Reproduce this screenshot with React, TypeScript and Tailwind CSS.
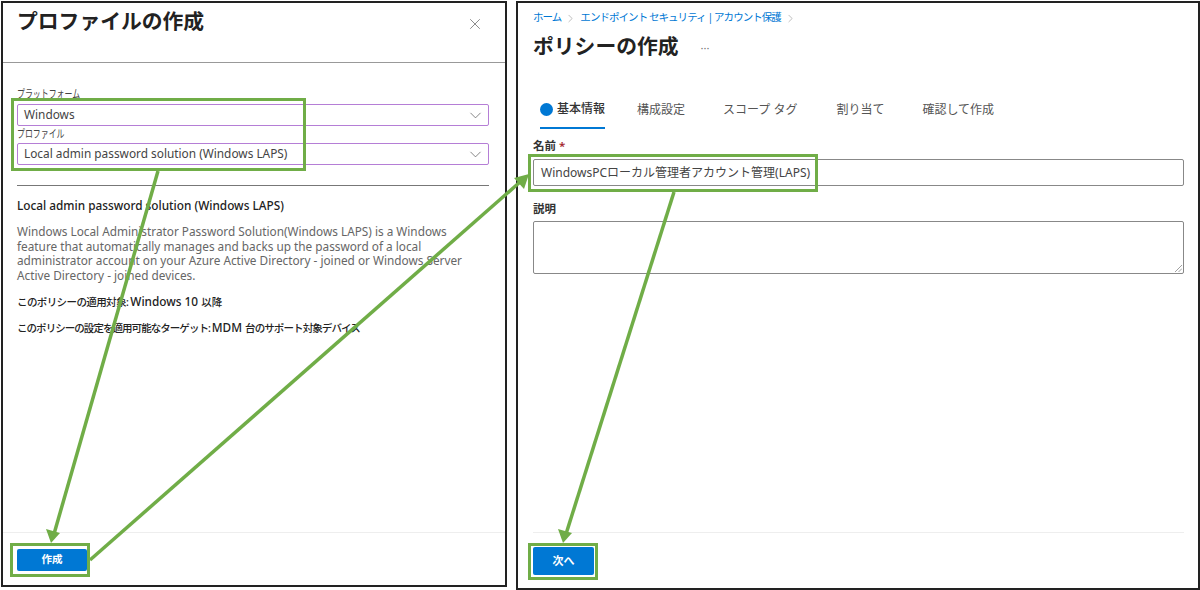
import { X, ChevronDown, ChevronRight } from "lucide-react";

const font = { fontFamily: '"Noto Sans", "Noto Sans CJK JP", sans-serif' };

function SelectBox({ value }: { value: string }) {
  return (
    <div className="flex items-center justify-between h-[22px] border border-[#b57ed6] rounded-[2px] pl-[6px] pr-[3px] ml-[14px] mr-[16px] text-[11.85px] text-[#444]">
      <span>{value}</span>
      <ChevronDown className="w-[19px] h-[19px] text-[#666]" strokeWidth={1} />
    </div>
  );
}

function FieldLabel({ text, className }: { text: string; className: string }) {
  return (
    <div className={`pl-[14px] text-[11px] text-[#444] ${className}`}>
      <div className="origin-left scale-x-[0.72] whitespace-nowrap">{text}</div>
    </div>
  );
}

function ProfilePanel() {
  return (
    <div className="flex flex-col w-[506px] h-[586px] border-2 border-[#222]">
      <div className="flex justify-between h-[60px] border-b border-[#999] pl-[14px] pr-[21px] pt-[2px]">
        <h1 className="text-[20.8px] leading-[32px] font-bold text-[#222]">プロファイルの作成</h1>
        <X className="w-[18px] h-[18px] mt-[10px] text-[#666]" strokeWidth={1} />
      </div>
      <div className="flex-1 pt-[22px]">
        <FieldLabel text="プラットフォーム" className="h-[19px] leading-[17px]" />
        <SelectBox value="Windows" />
        <FieldLabel text="プロファイル" className="h-[17px] leading-[16px]" />
        <SelectBox value="Local admin password solution (Windows LAPS)" />
        <div className="h-px bg-[#777] ml-[14px] mr-[16px] mt-[20px]" />
        <div className="pl-[14px] text-[11.8px]">
          <h2 className="mt-[11px] leading-[16px] font-medium text-[#222]">Local admin password solution (Windows LAPS)</h2>
          <p className="mt-[11px] leading-[14.7px] text-[#666] w-[460px]">
            Windows Local Administrator Password Solution(Windows LAPS) is a Windows feature that automatically manages and backs up the password of a local administrator account on your Azure Active Directory - joined or Windows Server Active Directory - joined devices.
          </p>
          <p className="mt-[10px] leading-[16px] font-medium text-[#222]">
            <span className="text-[10.5px] tracking-[-0.6px]">このポリシーの適用対象: </span>Windows 10 <span className="text-[10.5px]">以降</span>
          </p>
          <p className="mt-[9px] leading-[16px] font-medium text-[#222]">
            <span className="text-[10.5px] tracking-[-0.95px]">このポリシーの設定を適用可能なターゲット: </span>MDM <span className="text-[10.5px] tracking-[-0.9px]">台のサポート対象デバイス</span>
          </p>
        </div>
      </div>
      <div className="h-[53px] border-t border-[#eee] pl-[14px] pt-[16px]">
        <button className="block w-[70px] h-[22px] rounded-[2px] bg-[#0078d4] text-[10.5px] font-bold text-white">作成</button>
      </div>
    </div>
  );
}

function PolicyPanel() {
  return (
    <div className="flex flex-col w-[684px] h-[589px] border-2 border-[#222] pl-[15px] pr-[14px]">
      <div className="flex items-center gap-[3px] h-[14px] mt-[8px] text-[10.5px] text-[#0078d4] tracking-[-0.95px]">
        <span>ホーム</span>
        <ChevronRight className="w-[13px] h-[13px] text-[#888]" strokeWidth={1} />
        <span>エンドポイント セキュリティ | アカウント保護</span>
        <ChevronRight className="w-[13px] h-[13px] text-[#888]" strokeWidth={1} />
      </div>
      <div className="flex items-center h-[32px] mt-[6px]">
        <h1 className="text-[20.8px] font-bold text-[#222]">ポリシーの作成</h1>
        <span className="ml-[22px] mt-[2px] text-[11px] text-[#777]">···</span>
      </div>
      <div className="flex items-center h-[34px] mt-[32px] pl-[7px] text-[12px] text-[#555]">
        <div className="flex items-center h-full gap-[4px] border-b-2 border-[#0078d4] pb-[4px] font-medium text-[#333]">
          <span className="w-[13px] h-[13px] rounded-full bg-[#0078d4]" />
          基本情報
        </div>
        <span className="ml-[32px] pb-[4px]">構成設定</span>
        <span className="ml-[38px] pb-[4px]">スコープ タグ</span>
        <span className="ml-[39px] pb-[4px]">割り当て</span>
        <span className="ml-[38px] pb-[4px]">確認して作成</span>
      </div>
      <div className="h-[16px] mt-[9px] leading-[16px] text-[11.5px] font-semibold text-[#333]">
        名前 <span className="text-[#a4262c]">*</span>
      </div>
      <div className="flex items-center h-[27px] mt-[5px] border border-[#888] rounded-[2px] pl-[7px] text-[12px] text-[#444]">
        WindowsPCローカル管理者アカウント管理(LAPS)
      </div>
      <div className="h-[16px] mt-[15px] leading-[16px] text-[11.5px] font-semibold text-[#333]">説明</div>
      <div className="relative h-[53px] mt-[4px] border border-[#888] rounded-[2px]">
        <svg className="absolute right-[1px] bottom-[1px]" width="7" height="7" stroke="#888" strokeWidth="0.8">
          <path d="M0 7 L7 0 M3.5 7 L7 3.5" />
        </svg>
      </div>
      <div className="flex-1" />
      <div className="h-[56px] border-t border-[#eee] pt-[14px]">
        <button className="block w-[61px] h-[28px] rounded-[2px] bg-[#0078d4] text-[11px] font-bold text-white">次へ</button>
      </div>
    </div>
  );
}

export default function App() {
  return (
    <div className="relative flex gap-[9px] w-[1200px] h-[590px] pl-px pt-px bg-white overflow-hidden" style={font}>
      <ProfilePanel />
      <PolicyPanel />

      {/* green callouts */}
      <div className="absolute left-[11px] top-[98px] w-[295px] h-[73px] border-[3px] border-[#70ad47]" />
      <div className="absolute left-[10px] top-[543px] w-[80px] h-[34px] border-[3px] border-[#70ad47]" />
      <div className="absolute left-[528px] top-[154px] w-[290px] h-[38px] border-[3px] border-[#70ad47]" />
      <div className="absolute left-[528px] top-[543px] w-[70px] h-[37px] border-[3px] border-[#70ad47]" />
      <svg className="absolute left-0 top-0 pointer-events-none" width="1200" height="590" fill="none">
        <g stroke="#70ad47" strokeWidth="3.5">
          <path d="M158 171 L54 534" />
          <path d="M90 560 L520 182" />
          <path d="M674 192 L566 534" />
        </g>
        <g fill="#70ad47">
          <path d="M51 543 L46 529 L60 533 Z" />
          <path d="M529 174 L524 189 L514 178 Z" />
          <path d="M563 543 L558 529 L572 533 Z" />
        </g>
      </svg>
    </div>
  );
}
